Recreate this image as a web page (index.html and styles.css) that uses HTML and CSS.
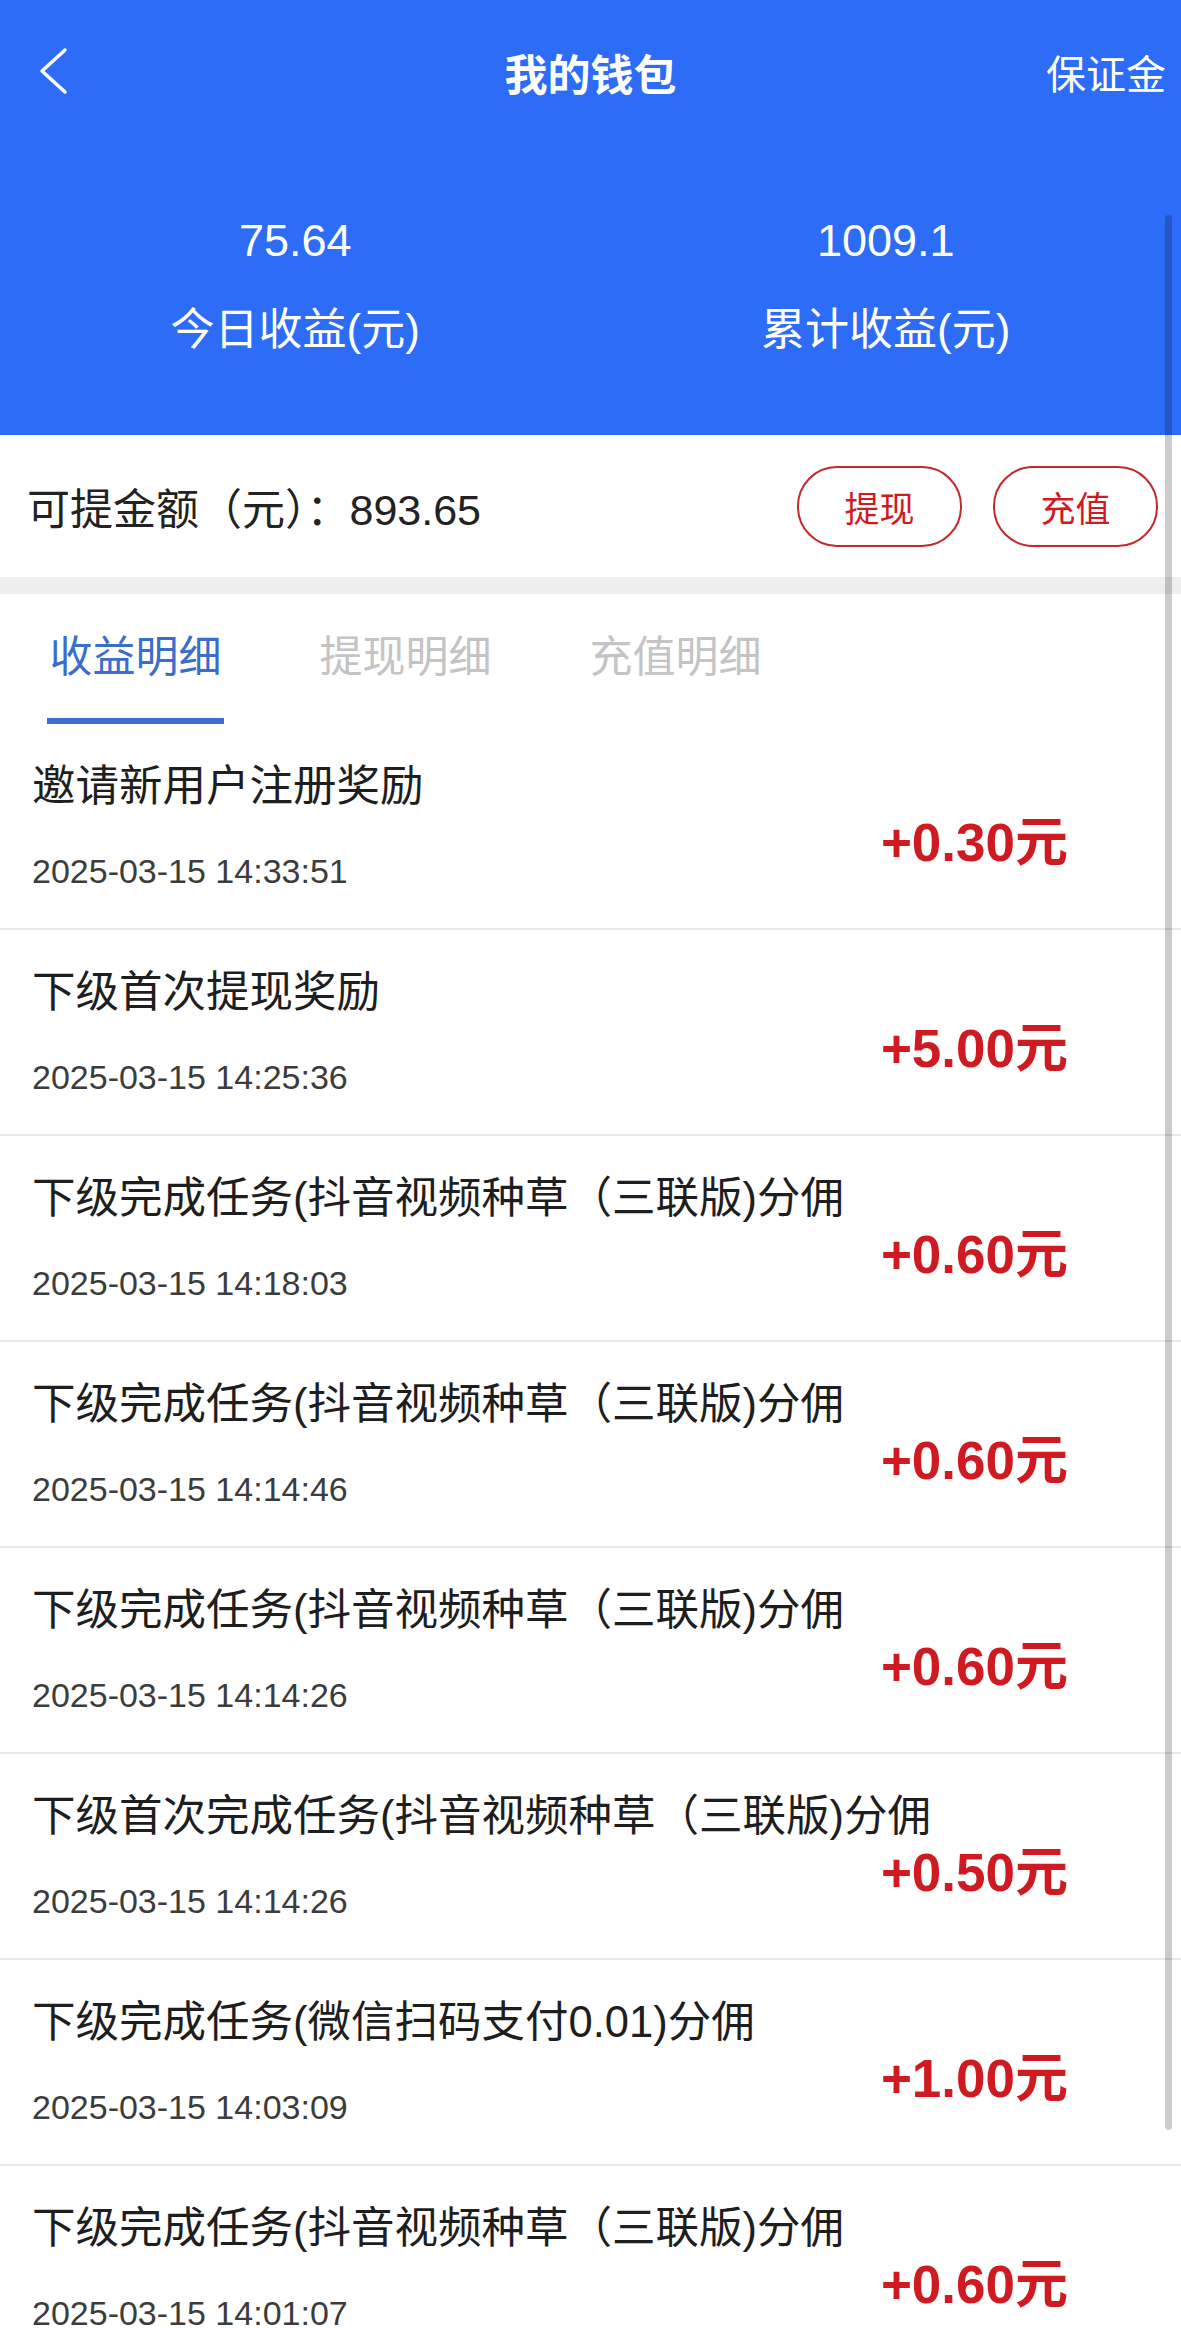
FILE: index.html
```html
<!DOCTYPE html>
<html lang="zh-CN">
<head>
<meta charset="UTF-8">
<title>我的钱包</title>
<link rel="stylesheet" href="styles.css">
</head>
<body>
<div class="page">

  <div class="top">
    <div class="nav">
      <div class="nav-left">
        <svg class="back" width="30" height="50" viewBox="0 0 30 50">
          <polyline points="26,3 3,24 26,45" fill="none" stroke="#fff" stroke-width="3.5" stroke-linecap="round" stroke-linejoin="round"/>
        </svg>
      </div>
      <div class="nav-title">我的钱包</div>
      <div class="nav-right">保证金</div>
    </div>

    <div class="stats">
      <div class="stat">
        <div class="stat-num">75.64</div>
        <div class="stat-label">今日收益(元)</div>
      </div>
      <div class="stat">
        <div class="stat-num">1009.1</div>
        <div class="stat-label">累计收益(元)</div>
      </div>
    </div>
  </div>

  <div class="balance">
    <div class="balance-text">可提金额（元）：893.65</div>
    <div class="balance-btns">
      <div class="btn">提现</div>
      <div class="btn">充值</div>
    </div>
  </div>

  <div class="tabs">
    <div class="tab active">收益明细</div>
    <div class="tab">提现明细</div>
    <div class="tab">充值明细</div>
  </div>

  <div class="list">
    <div class="item">
      <div class="item-info">
        <div class="item-title">邀请新用户注册奖励</div>
        <div class="item-time">2025-03-15 14:33:51</div>
      </div>
      <div class="item-amount">+0.30元</div>
    </div>
    <div class="item">
      <div class="item-info">
        <div class="item-title">下级首次提现奖励</div>
        <div class="item-time">2025-03-15 14:25:36</div>
      </div>
      <div class="item-amount">+5.00元</div>
    </div>
    <div class="item">
      <div class="item-info">
        <div class="item-title">下级完成任务(抖音视频种草（三联版)分佣</div>
        <div class="item-time">2025-03-15 14:18:03</div>
      </div>
      <div class="item-amount">+0.60元</div>
    </div>
    <div class="item">
      <div class="item-info">
        <div class="item-title">下级完成任务(抖音视频种草（三联版)分佣</div>
        <div class="item-time">2025-03-15 14:14:46</div>
      </div>
      <div class="item-amount">+0.60元</div>
    </div>
    <div class="item">
      <div class="item-info">
        <div class="item-title">下级完成任务(抖音视频种草（三联版)分佣</div>
        <div class="item-time">2025-03-15 14:14:26</div>
      </div>
      <div class="item-amount">+0.60元</div>
    </div>
    <div class="item">
      <div class="item-info">
        <div class="item-title">下级首次完成任务(抖音视频种草（三联版)分佣</div>
        <div class="item-time">2025-03-15 14:14:26</div>
      </div>
      <div class="item-amount">+0.50元</div>
    </div>
    <div class="item">
      <div class="item-info">
        <div class="item-title">下级完成任务(微信扫码支付0.01)分佣</div>
        <div class="item-time">2025-03-15 14:03:09</div>
      </div>
      <div class="item-amount">+1.00元</div>
    </div>
    <div class="item">
      <div class="item-info">
        <div class="item-title">下级完成任务(抖音视频种草（三联版)分佣</div>
        <div class="item-time">2025-03-15 14:01:07</div>
      </div>
      <div class="item-amount">+0.60元</div>
    </div>
  </div>

  <div class="scroll-thumb"></div>
</div>
</body>
</html>
```

FILE: styles.css
```css
:root {
  --azul: #2d6cf7;
  --rojo: #d01a21;
  --tab-azul: #3a6dcc;
  --linea: #e9e9e9;
}
html,body {
  margin: 0;
  padding: 0;
  background: #fff;
  font-family: "Liberation Sans", "Noto Sans CJK SC", sans-serif;
  color: #222;
}
.page {
  position: relative;
  height: 100vh;
  overflow: hidden;
}

/* cabecera azul */
.top {
  background: var(--azul);
  color: #fff;
  height: 435px;
}
.nav {
  height: 144px;
  display: grid;
  grid-template-columns: 1fr auto 1fr;
  align-items: center;
  padding: 0 15px;
}
.nav-left {
  display: flex;
  padding-left: 24px;
}
.nav-title {
  font-size: 43px;
  font-weight: bold;
}
.nav-right {
  text-align: right;
  font-size: 40px;
  white-space: nowrap;
}
.stats {
  display: flex;
  padding-top: 72px;
}
.stat {
  flex: 1;
  display: flex;
  flex-direction: column;
  align-items: center;
  gap: 39px;
}
.stat-num {
  font-size: 45px;
  line-height: 50px;
}
.stat-label {
  font-size: 44px;
  line-height: 50px;
}

/* saldo */
.balance {
  height: 142px;
  display: flex;
  align-items: center;
  justify-content: space-between;
  padding: 0 23px 0 27px;
  border-bottom: 17px solid #eeeeee;
}
.balance-text {
  font-size: 43px;
  color: #222;
}
.balance-btns {
  display: flex;
  gap: 31px;
}
.btn {
  width: 161px;
  height: 77px;
  border: 2px solid #c3282e;
  border-radius: 40px;
  color: var(--rojo);
  font-size: 35px;
  display: flex;
  align-items: center;
  justify-content: center;
}

/* pestañas */
.tabs {
  height: 130px;
  box-sizing: border-box;
  display: flex;
  gap: 93px;
  padding: 37px 0 0 47px;
}
.tab {
  width: 177px;
  display: flex;
  flex-direction: column;
  align-items: center;
  font-size: 43px;
  line-height: 52px;
  color: #c4c4c4;
}
.tab.active {
  color: var(--tab-azul);
}
.tab.active::after {
  content: "";
  width: 177px;
  height: 6px;
  margin-top: 35px;
  background: var(--tab-azul);
}

/* lista */
.item {
  height: 204px;
  display: flex;
  justify-content: space-between;
  padding: 0 113px 0 32px;
  border-bottom: 2px solid var(--linea);
}
.item-info {
  flex: 1;
  min-width: 0;
  padding-top: 34px;
}
.item-title {
  font-size: 43.5px;
  line-height: 56px;
  color: #1e1e1e;
  white-space: nowrap;
}
.item-time {
  margin-top: 37px;
  font-size: 34px;
  line-height: 40px;
  color: #3c3c3c;
}
.item-amount {
  flex-shrink: 0;
  margin-top: 89px;
  font-size: 53px;
  line-height: 60px;
  height: 60px;
  font-weight: bold;
  color: var(--rojo);
  white-space: nowrap;
}

.scroll-thumb {
  position: absolute;
  top: 215px;
  right: 9px;
  width: 7px;
  height: 1915px;
  border-radius: 4px;
  background: rgba(0, 0, 0, 0.2);
}
```
